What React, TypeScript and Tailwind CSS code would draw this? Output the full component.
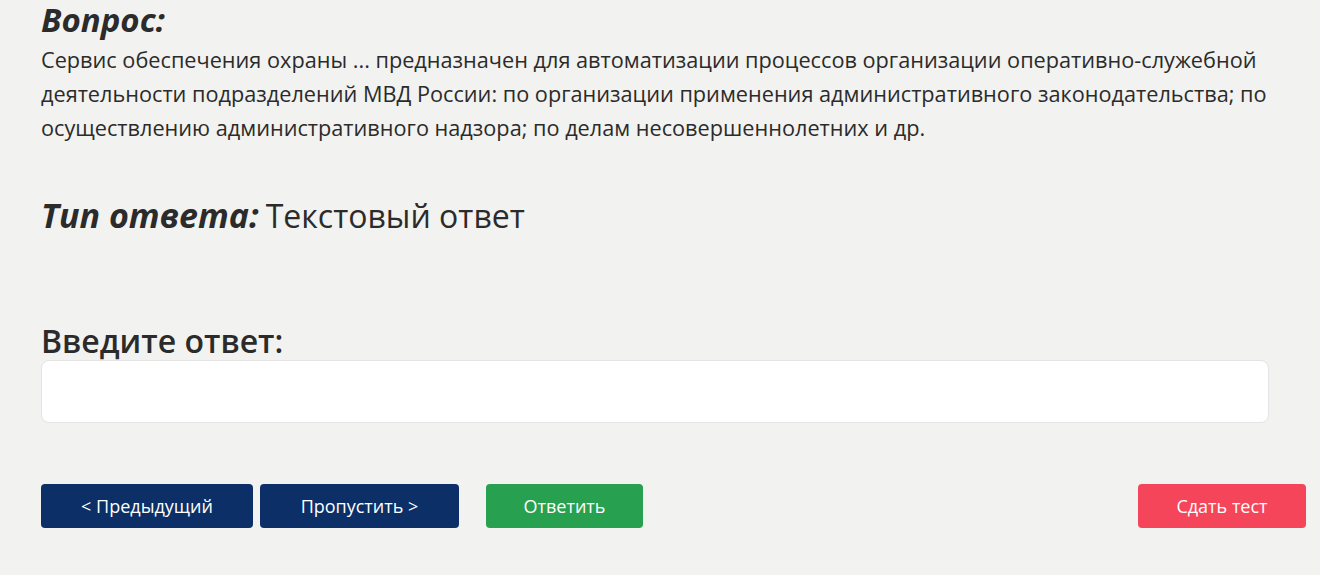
import React from "react";

export default function App() {
  return (
    <div
      className="min-h-[575px] w-full bg-[#f2f2f0] text-[#2b2b2b]"
      style={{ fontFamily: '"Open Sans", "Noto Sans", sans-serif' }}
    >
      <div className="pl-[41px] pr-[14px] pt-0">
        <h2 className="text-[33px] font-bold italic leading-[40px]">Вопрос:</h2>
        <p className="w-[1245px] text-[21.7px] leading-[34px] mt-[3px]">
          Сервис обеспечения охраны ... предназначен для автоматизации процессов организации оперативно-служебной деятельности подразделений МВД России: по организации применения административного законодательства; по осуществлению административного надзора; по делам несовершеннолетних и др.
        </p>
        <div className="mt-[48px] flex items-baseline leading-[44px]">
          <span className="text-[34px] font-bold italic mr-[7px]">Тип ответа:</span>
          <span className="text-[32px]">Текстовый ответ</span>
        </div>
        <div className="mt-[83px] text-[32px] font-semibold leading-[40px]">Введите ответ:</div>
        <input
          type="text"
          className="-mt-[1px] block h-[63px] w-[1228px] rounded-[8px] border border-[#e4e4e4] bg-white px-3 outline-none"
        />
        <div className="mt-[61px] flex items-center text-[18px] text-white">
          <button className="h-[44px] w-[212px] rounded-[4px] bg-[#0b2f66]">&lt; Предыдущий</button>
          <button className="ml-[7px] h-[44px] w-[199px] rounded-[4px] bg-[#0b2f66]">Пропустить &gt;</button>
          <button className="ml-[27px] h-[44px] w-[157px] rounded-[4px] bg-[#27a04f]">Ответить</button>
          <div className="flex-1" />
          <button className="h-[44px] w-[168px] rounded-[4px] bg-[#f5455a]">Сдать тест</button>
        </div>
      </div>
    </div>
  );
}
